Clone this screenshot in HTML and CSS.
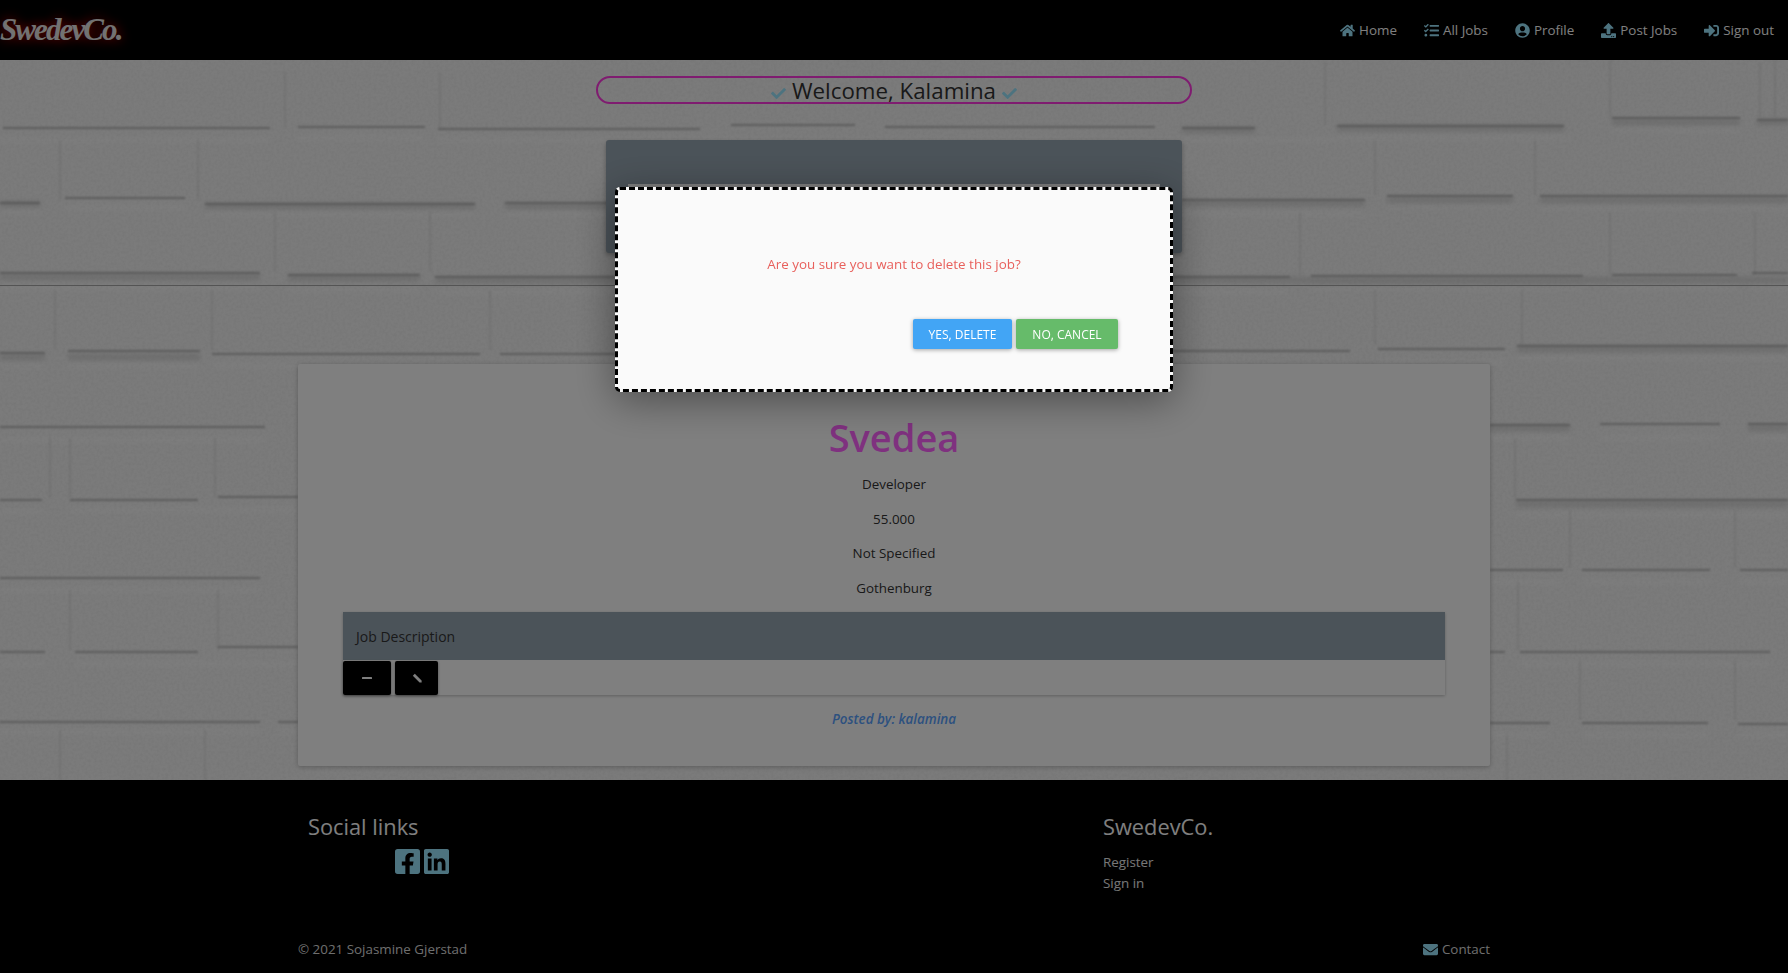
FILE: index.html
```html
<!DOCTYPE html>
<html>
	<head>
		<title>SwedevCo.</title>
		<link rel="stylesheet" href="styles.css">
	</head>
	<body>
	<nav class="navbar">
		<a class="logo" href="#">SwedevCo.</a>
		<ul class="nav_links">
			<li><svg class="icon" viewBox="0 0 576 512"><path d="M280.37 148.26L96 300.11V464a16 16 0 0 0 16 16l112.06-.29a16 16 0 0 0 15.92-16V368a16 16 0 0 1 16-16h64a16 16 0 0 1 16 16v95.64a16 16 0 0 0 16 16.05L464 480a16 16 0 0 0 16-16V300L295.67 148.26a12.19 12.19 0 0 0-15.3 0zM571.6 251.47L488 182.56V44.05a12 12 0 0 0-12-12h-56a12 12 0 0 0-12 12v72.61L318.47 43a48 48 0 0 0-61 0L4.34 251.47a12 12 0 0 0-1.6 16.9l25.5 31A12 12 0 0 0 45.15 301l235.22-193.74a12.19 12.19 0 0 1 15.3 0L530.9 301a12 12 0 0 0 16.9-1.6l25.5-31a12 12 0 0 0-1.7-16.93z"/></svg>Home</li>
			<li><svg class="icon" viewBox="0 0 512 512"><path d="M139.61 35.5a12 12 0 0 0-17 0L58.93 98.81l-22.7-22.12a12 12 0 0 0-17 0L3.53 92.41a12 12 0 0 0 0 17l47.59 47.4a12.78 12.78 0 0 0 17.61 0l15.59-15.62L156.52 69a12.09 12.09 0 0 0 .09-17zm0 159.19a12 12 0 0 0-17 0l-63.68 63.72-22.7-22.1a12 12 0 0 0-17 0L3.53 252a12 12 0 0 0 0 17L51 316.5a12.77 12.77 0 0 0 17.6 0l15.7-15.69 72.2-72.22a12 12 0 0 0 .09-16.9zM64 368c-26.49 0-48.59 21.5-48.59 48S37.53 464 64 464a48 48 0 0 0 0-96zm432 16H208a16 16 0 0 0-16 16v32a16 16 0 0 0 16 16h288a16 16 0 0 0 16-16v-32a16 16 0 0 0-16-16zm0-320H208a16 16 0 0 0-16 16v32a16 16 0 0 0 16 16h288a16 16 0 0 0 16-16V80a16 16 0 0 0-16-16zm0 160H208a16 16 0 0 0-16 16v32a16 16 0 0 0 16 16h288a16 16 0 0 0 16-16v-32a16 16 0 0 0-16-16z"/></svg>All Jobs</li>
			<li><svg class="icon" viewBox="0 0 496 512"><path d="M248 8C111 8 0 119 0 256s111 248 248 248 248-111 248-248S385 8 248 8zm0 96c48.6 0 88 39.4 88 88s-39.4 88-88 88-88-39.4-88-88 39.4-88 88-88zm0 344c-58.7 0-111.3-26.6-146.5-68.2 18.8-35.4 55.6-59.8 98.5-59.8 2.4 0 4.8.4 7.1 1.1 13 4.2 26.6 6.9 40.9 6.9 14.3 0 28-2.7 40.9-6.9 2.3-.7 4.7-1.1 7.1-1.1 42.9 0 79.7 24.4 98.5 59.8C359.3 421.4 306.7 448 248 448z"/></svg>Profile</li>
			<li><svg class="icon" viewBox="0 0 512 512"><path d="M296 384h-80c-13.3 0-24-10.7-24-24V192h-87.7c-17.8 0-26.7-21.5-14.1-34.1L242.3 5.7c7.5-7.5 19.8-7.5 27.3 0l152.2 152.2c12.6 12.6 3.7 34.1-14.1 34.1H320v168c0 13.3-10.7 24-24 24zm216-8v112c0 13.3-10.7 24-24 24H24c-13.3 0-24-10.7-24-24V376c0-13.3 10.7-24 24-24h136v8c0 30.9 25.1 56 56 56h80c30.9 0 56-25.1 56-56v-8h136c13.3 0 24 10.7 24 24zm-124 88c0-11-9-20-20-20s-20 9-20 20 9 20 20 20 20-9 20-20zm64 0c0-11-9-20-20-20s-20 9-20 20 9 20 20 20 20-9 20-20z"/></svg>Post Jobs</li>
			<li><svg class="icon" viewBox="0 0 512 512"><path d="M416 448h-84c-6.6 0-12-5.4-12-12v-40c0-6.6 5.4-12 12-12h84c17.7 0 32-14.3 32-32V160c0-17.7-14.3-32-32-32h-84c-6.6 0-12-5.4-12-12V76c0-6.6 5.4-12 12-12h84c53 0 96 43 96 96v192c0 53-43 96-96 96zm-47-201L201 79c-15-15-41-4.5-41 17v96H24c-13.3 0-24 10.7-24 24v96c0 13.3 10.7 24 24 24h136v96c0 21.5 26 32 41 17l168-168c9.3-9.4 9.3-24.6 0-34z"/></svg>Sign out</li>
		</ul>
	</nav>

	<main class="wall">
		<!-- brick wall drawn by hand, coordinates are page pixels -->
		<svg class="bricks" viewBox="0 60 1788 720" preserveAspectRatio="none">
			<defs>
				<filter id="soft" x="-2%" y="-2%" width="104%" height="104%"><feGaussianBlur stdDeviation="1"/></filter>
				<filter id="softer" x="-2%" y="-2%" width="104%" height="104%"><feGaussianBlur stdDeviation="2.5"/></filter>
				<filter id="grain" x="0" y="0" width="100%" height="100%">
					<feTurbulence type="fractalNoise" baseFrequency="0.35" numOctaves="3" seed="4"/>
					<feColorMatrix values="0 0 0 0 0.4  0 0 0 0 0.4  0 0 0 0 0.4  0.22 0 0 0 -0.08"/>
				</filter>
			</defs>
			<path class="edge" filter="url(#softer)" d="M0 140H270M298 138H425M438 140H1182M1182 140H1335M1337 138H1570M1612 130H1740M0 212H40M65 208H185M205 214H475M505 214H1365M1387 206H1513M1540 208H1788M0 288H260M288 290H420M435 292H1290M1311 288H1583M1612 288H1737M1752 288H1788M0 366H45M68 366H200M212 366H480M500 366H1350M1378 362H1505M1517 358H1788M0 440H265M1490 438H1570M1600 438H1720M1748 438H1788M0 512H42M70 510H298M1516 515H1788M0 590H260M1490 582H1563M1582 582H1710M1740 582H1788M0 664H45M75 664H298M1520 664H1770M0 732H260M278 732H298M1490 735H1550M1582 735H1708M1738 735H1788"/>
			<path class="joint" filter="url(#soft)" d="M285 72V128M440 72V128M1325 62V125M1610 60V118M1760 62V118M60 140V200M198 140V200M275 212V272M430 212V272M55 290V350M212 290V350M490 290V350M1375 140V195M1535 140V195M1300 212V275M1610 212V275M1755 212V275M1375 290V345M1522 290V345M50 438V498M70 438V498M215 438V498M70 590V650M218 590V650M60 730V780M205 730V780M1515 438V498M1570 510V568M1735 510V568M1518 582V650M1580 660V720M1735 660V720M1507 735V780M1775 60V118"/>
			<path class="mortar_wide" filter="url(#softer)" d="M0 277H260M288 278H420M435 280H1782M0 204H40M205 206H475M505 206H610M1182 203H1365M1387 200H1513M1540 200H1788M1182 130H1255M1337 128H1564M1612 122H1740M1757 122H1788M0 357H45M68 357H200M1172 280H1290M1311 281H1583M1612 280H1737M1752 280H1788M1517 349H1788M1490 428H1570M1748 428H1788M1516 504H1788"/>
			<path class="mortar" filter="url(#soft)" d="M3 128H270M298 127H425M438 129H700M731 125H855M885 127H1155M1182 128H1255M1337 126H1564M1612 118H1740M1757 120H1788M65 198H185M0 203H40M205 204H475M505 203H615M1182 200H1365M1387 196H1513M1540 196H1788M0 273H260M288 275H420M435 277H615M1172 277H1290M1311 276H1583M1612 275H1737M1752 273H1788M0 353H45M68 351H200M212 354H480M500 354H615M1172 351H1350M1378 349H1505M1517 346H1788M0 427H265M0 500H42M70 500H198M218 497H298M0 578H260M0 652H45M75 652H198M218 647H298M0 722H260M278 722H298M1490 425H1570M1600 424H1720M1748 424H1788M1516 500H1788M1490 570H1563M1582 570H1710M1740 570H1788M1490 652H1505M1520 652H1770M1490 723H1550M1582 723H1708M1738 724H1788"/>
			<rect x="0" y="60" width="1788" height="720" filter="url(#grain)"/>
		</svg>

		<div class="welcome">
			<svg class="check" viewBox="0 0 512 512"><path d="M173.898 439.404l-166.4-166.4c-9.997-9.997-9.997-26.206 0-36.204l36.203-36.204c9.997-9.998 26.207-9.998 36.204 0L192 312.69 432.095 72.596c9.997-9.997 26.207-9.997 36.204 0l36.203 36.204c9.997 9.997 9.997 26.206 0 36.204l-294.4 294.401c-9.998 9.997-26.207 9.997-36.204-.001z"/></svg>
			<span>Welcome, Kalamina</span>
			<svg class="check" viewBox="0 0 512 512"><path d="M173.898 439.404l-166.4-166.4c-9.997-9.997-9.997-26.206 0-36.204l36.203-36.204c9.997-9.998 26.207-9.998 36.204 0L192 312.69 432.095 72.596c9.997-9.997 26.207-9.997 36.204 0l36.203 36.204c9.997 9.997 9.997 26.206 0 36.204l-294.4 294.401c-9.998 9.997-26.207 9.997-36.204-.001z"/></svg>
		</div>

		<div class="panel"><div class="panel_inner"></div></div>

		<hr class="rule">

		<section class="job_card">
			<h1 class="job_company">Svedea</h1>
			<p class="job_title">Developer</p>
			<p>55.000</p>
			<p>Not Specified</p>
			<p>Gothenburg</p>
			<div class="job_desc">
				<div class="job_desc_head">Job Description</div>
				<div class="job_actions">
					<button class="btn_action btn_remove" type="button">
						<svg viewBox="0 0 10 10"><rect x="0" y="4" width="10" height="2" rx="0.5"/></svg>
					</button>
					<button class="btn_action btn_edit" type="button">
						<svg viewBox="0 0 10 10"><path d="M0.8 2.8L2.8 0.8L9.6 7.6L9.6 9.6L7.6 9.6z"/></svg>
					</button>
				</div>
			</div>
			<p class="job_poster">Posted by: kalamina</p>
		</section>
	</main>

	<footer class="footer">
		<div class="footer_cols">
			<div class="footer_social">
				<h4>Social links</h4>
				<div class="social_icons">
					<svg viewBox="0 32 448 448"><path d="M400 32H48A48 48 0 0 0 0 80v352a48 48 0 0 0 48 48h137.25V327.69h-63V256h63v-54.64c0-62.15 37-96.48 93.67-96.48 27.14 0 55.52 4.84 55.52 4.84v61h-31.27c-30.81 0-40.42 19.12-40.42 38.73V256h68.78l-11 71.69h-57.78V480H400a48 48 0 0 0 48-48V80a48 48 0 0 0-48-48z"/></svg>
					<svg viewBox="0 32 448 448"><path d="M416 32H31.9C14.3 32 0 46.5 0 64.3v383.4C0 465.5 14.3 480 31.9 480H416c17.6 0 32-14.5 32-32.3V64.3c0-17.8-14.4-32.3-32-32.3zM135.4 416H69V202.2h66.5V416zm-33.2-243c-21.3 0-38.5-17.3-38.5-38.5S80.9 96 102.2 96c21.2 0 38.5 17.3 38.5 38.5 0 21.3-17.2 38.5-38.5 38.5zm282.1 243h-66.4V312c0-24.8-.5-56.7-34.5-56.7-34.6 0-39.9 27-39.9 54.9V416h-66.4V202.2h63.7v29.2h.9c8.9-16.8 30.6-34.5 62.9-34.5 67.2 0 79.7 44.3 79.7 101.9V416z"/></svg>
				</div>
			</div>
			<div class="footer_site">
				<h4>SwedevCo.</h4>
				<a href="#">Register</a>
				<a href="#">Sign in</a>
			</div>
		</div>
		<div class="footer_bottom">
			<span>© 2021 Sojasmine Gjerstad</span>
			<span class="contact"><svg class="icon" viewBox="0 0 512 512"><path d="M502.3 190.8c3.9-3.1 9.7-.2 9.7 4.7V400c0 26.5-21.5 48-48 48H48c-26.5 0-48-21.5-48-48V195.6c0-5 5.7-7.8 9.7-4.7 22.4 17.4 52.1 39.5 154.1 113.6 21.1 15.4 56.7 47.8 92.2 47.6 35.7.3 71.4-32.8 92.3-47.6 102-74.1 131.6-96.3 154-113.7zM256 320c23.2.4 56.6-29.2 73.4-41.4 132.7-96.3 142.8-104.7 173.4-128.7 5.8-4.5 9.2-11.5 9.2-18.9v-19c0-26.5-21.5-48-48-48H48C21.5 64 0 85.5 0 112v19c0 7.4 3.4 14.3 9.2 18.9 30.6 23.9 40.7 32.4 173.4 128.7 16.8 12.2 50.2 41.8 73.4 41.4z"/></svg>Contact</span>
		</div>
	</footer>

	<div class="overlay"></div>
	<div class="modal">
		<p class="modal_text">Are you sure you want to delete this job?</p>
		<div class="modal_buttons">
			<button class="btn btn_yes" type="button">Yes, delete</button>
			<button class="btn btn_no" type="button">No, cancel</button>
		</div>
	</div>
	</body>
</html>
```

FILE: styles.css
```css
html,
body {
  height: 100%;
}
body {
  margin: 0;
  overflow: hidden;
  background: #000;
  color: #333;
  font-family: "Open Sans", "Noto Sans", sans-serif;
  font-size: 13.4px;
}
.icon {
  width: 15px;
  height: 15px;
  margin-right: 4px;
  fill: #9be6ff;
  flex: none;
}

/* navbar */
.navbar {
  height: 60px;
  background: #000;
  display: flex;
  align-items: center;
  justify-content: space-between;
}
.logo {
  width: 125px;
  font-family: "Liberation Serif", serif;
  font-style: italic;
  font-weight: bold;
  font-size: 31px;
  letter-spacing: -1.9px;
  color: #e4e4e4;
  text-decoration: none;
  text-shadow: 0 0 12px #e00;
}
.nav_links {
  list-style: none;
  display: flex;
  gap: 27px;
  margin: 0;
  padding: 0 14px 0 0;
  color: #fff;
}
.nav_links li {
  display: flex;
  align-items: center;
}

/* wall */
.wall {
  position: relative;
  height: 720px;
  padding-top: 16px;
  box-sizing: border-box;
  background: #f6f6f6;
}
.bricks {
  position: absolute;
  top: 0;
  left: 0;
  width: 100%;
  height: 100%;
}
.bricks path {
  fill: none;
}
.mortar {
  stroke: #a4a4a4;
  stroke-width: 1.6;
}
.mortar_wide {
  stroke: #dadada;
  stroke-width: 6;
}
.edge {
  stroke: #fff;
  stroke-width: 3;
}
.joint {
  stroke: #e6e6e6;
  stroke-width: 2;
}
.welcome,
.panel,
.rule,
.job_card {
  position: relative;
}
.welcome {
  width: 596px;
  height: 28px;
  box-sizing: border-box;
  margin: 0 auto;
  border: 2px solid #ff38e0;
  border-radius: 14px;
  display: flex;
  align-items: center;
  justify-content: center;
  gap: 6px;
  font-size: 22.3px;
  color: #333;
}
.welcome span {
  position: relative;
}
.check {
  width: 15px;
  height: 15px;
  fill: #9be6ff;
  margin-top: 7px;
}
.panel {
  width: 576px;
  height: 113px;
  margin: 36px auto 0;
  background: #97a6b2;
  border-radius: 3px;
  box-shadow: 0 2px 5px rgba(0, 0, 0, 0.3);
  padding-top: 44px;
  box-sizing: border-box;
}
.panel_inner {
  width: 532px;
  height: 40px;
  margin: 0 auto;
  background: #fff;
}
.rule {
  height: 1px;
  margin: 32px 0 0;
  border: 0;
  background: #a8a8a8;
}

/* job card */
.job_card {
  width: 1192px;
  height: 402px;
  box-sizing: border-box;
  margin: 78px auto 0;
  padding: 45px 45px 0;
  background: #fff;
  border-radius: 2px;
  box-shadow: 0 1px 5px rgba(0, 0, 0, 0.25);
  text-align: center;
}
.job_card p {
  margin: 0 0 15px;
  line-height: 19.5px;
}
.job_company {
  margin: 0 0 10px;
  font-size: 38px;
  line-height: 56px;
  font-weight: 600;
  color: #ff62ff;
}
.job_card .job_title {
  color: #333;
}
.job_desc {
  margin-top: -1px;
  background: #fff;
  box-shadow: 0 1px 3px rgba(0, 0, 0, 0.25);
}
.job_desc_head {
  height: 48px;
  line-height: 49px;
  padding-left: 13px;
  font-size: 14px;
  text-align: left;
  background: #97a6b2;
  color: #333;
}
.job_actions {
  display: flex;
  gap: 4px;
  padding-top: 1px;
}
.btn_action {
  height: 34px;
  padding: 0;
  border: 0;
  border-radius: 2px;
  background: #000;
  display: flex;
  align-items: center;
  justify-content: center;
  box-shadow: 0 1px 3px rgba(0, 0, 0, 0.4);
}
.btn_action svg {
  width: 10px;
  height: 10px;
  fill: #fff;
}
.btn_remove {
  width: 48px;
}
.btn_edit {
  width: 43px;
}
.job_card .job_poster {
  margin-top: 15px;
  font-style: italic;
  font-weight: 600;
  color: #5aa2ff;
}

/* footer */
.footer {
  height: 193px;
  background: #000;
  color: #fff;
  box-sizing: border-box;
  padding-top: 30px;
}
.footer_cols,
.footer_bottom {
  width: 1192px;
  margin: 0 auto;
}
.footer_cols {
  height: 130px;
  display: grid;
  grid-template-columns: 805px 1fr;
}
.footer_social {
  padding-left: 10px;
}
.footer h4 {
  margin: 0;
  font-size: 21.8px;
  line-height: 34px;
  font-weight: 400;
}
.social_icons {
  display: flex;
  gap: 4px;
  padding: 5px 0 0 87px;
}
.social_icons svg {
  width: 25px;
  height: 25px;
  fill: #9be6ff;
}
.footer_site a {
  display: block;
  color: #eee;
  text-decoration: none;
  line-height: 20.5px;
}
.footer_site h4 {
  margin-bottom: 8px;
}
.footer_bottom {
  display: flex;
  justify-content: space-between;
  color: #ddd;
}
.contact {
  display: flex;
  align-items: center;
}

/* delete dialog */
.overlay {
  position: fixed;
  top: 0;
  left: 0;
  right: 0;
  bottom: 0;
  background: rgba(0, 0, 0, 0.5);
}
.modal {
  position: fixed;
  top: 187px;
  left: 615px;
  width: 558px;
  height: 205px;
  box-sizing: border-box;
  border: 3px dashed #000;
  border-radius: 5px;
  background: #fafafa;
  box-shadow: 0 8px 40px rgba(0, 0, 0, 0.4);
  text-align: center;
}
.modal_text {
  margin: 64px 0 0;
  line-height: 20px;
  color: #e8605c;
}
.modal_buttons {
  display: flex;
  justify-content: flex-end;
  gap: 4px;
  margin-top: 45px;
  padding-right: 52px;
}
.btn {
  height: 30px;
  padding: 0;
  border: 0;
  border-radius: 2px;
  color: #fff;
  font-family: inherit;
  font-size: 12px;
  font-weight: 500;
  text-transform: uppercase;
  box-shadow: 0 1px 4px rgba(0, 0, 0, 0.35);
}
.btn_yes {
  width: 99px;
  background: #42a5f5;
}
.btn_no {
  width: 102px;
  background: #66bb6a;
}
```
